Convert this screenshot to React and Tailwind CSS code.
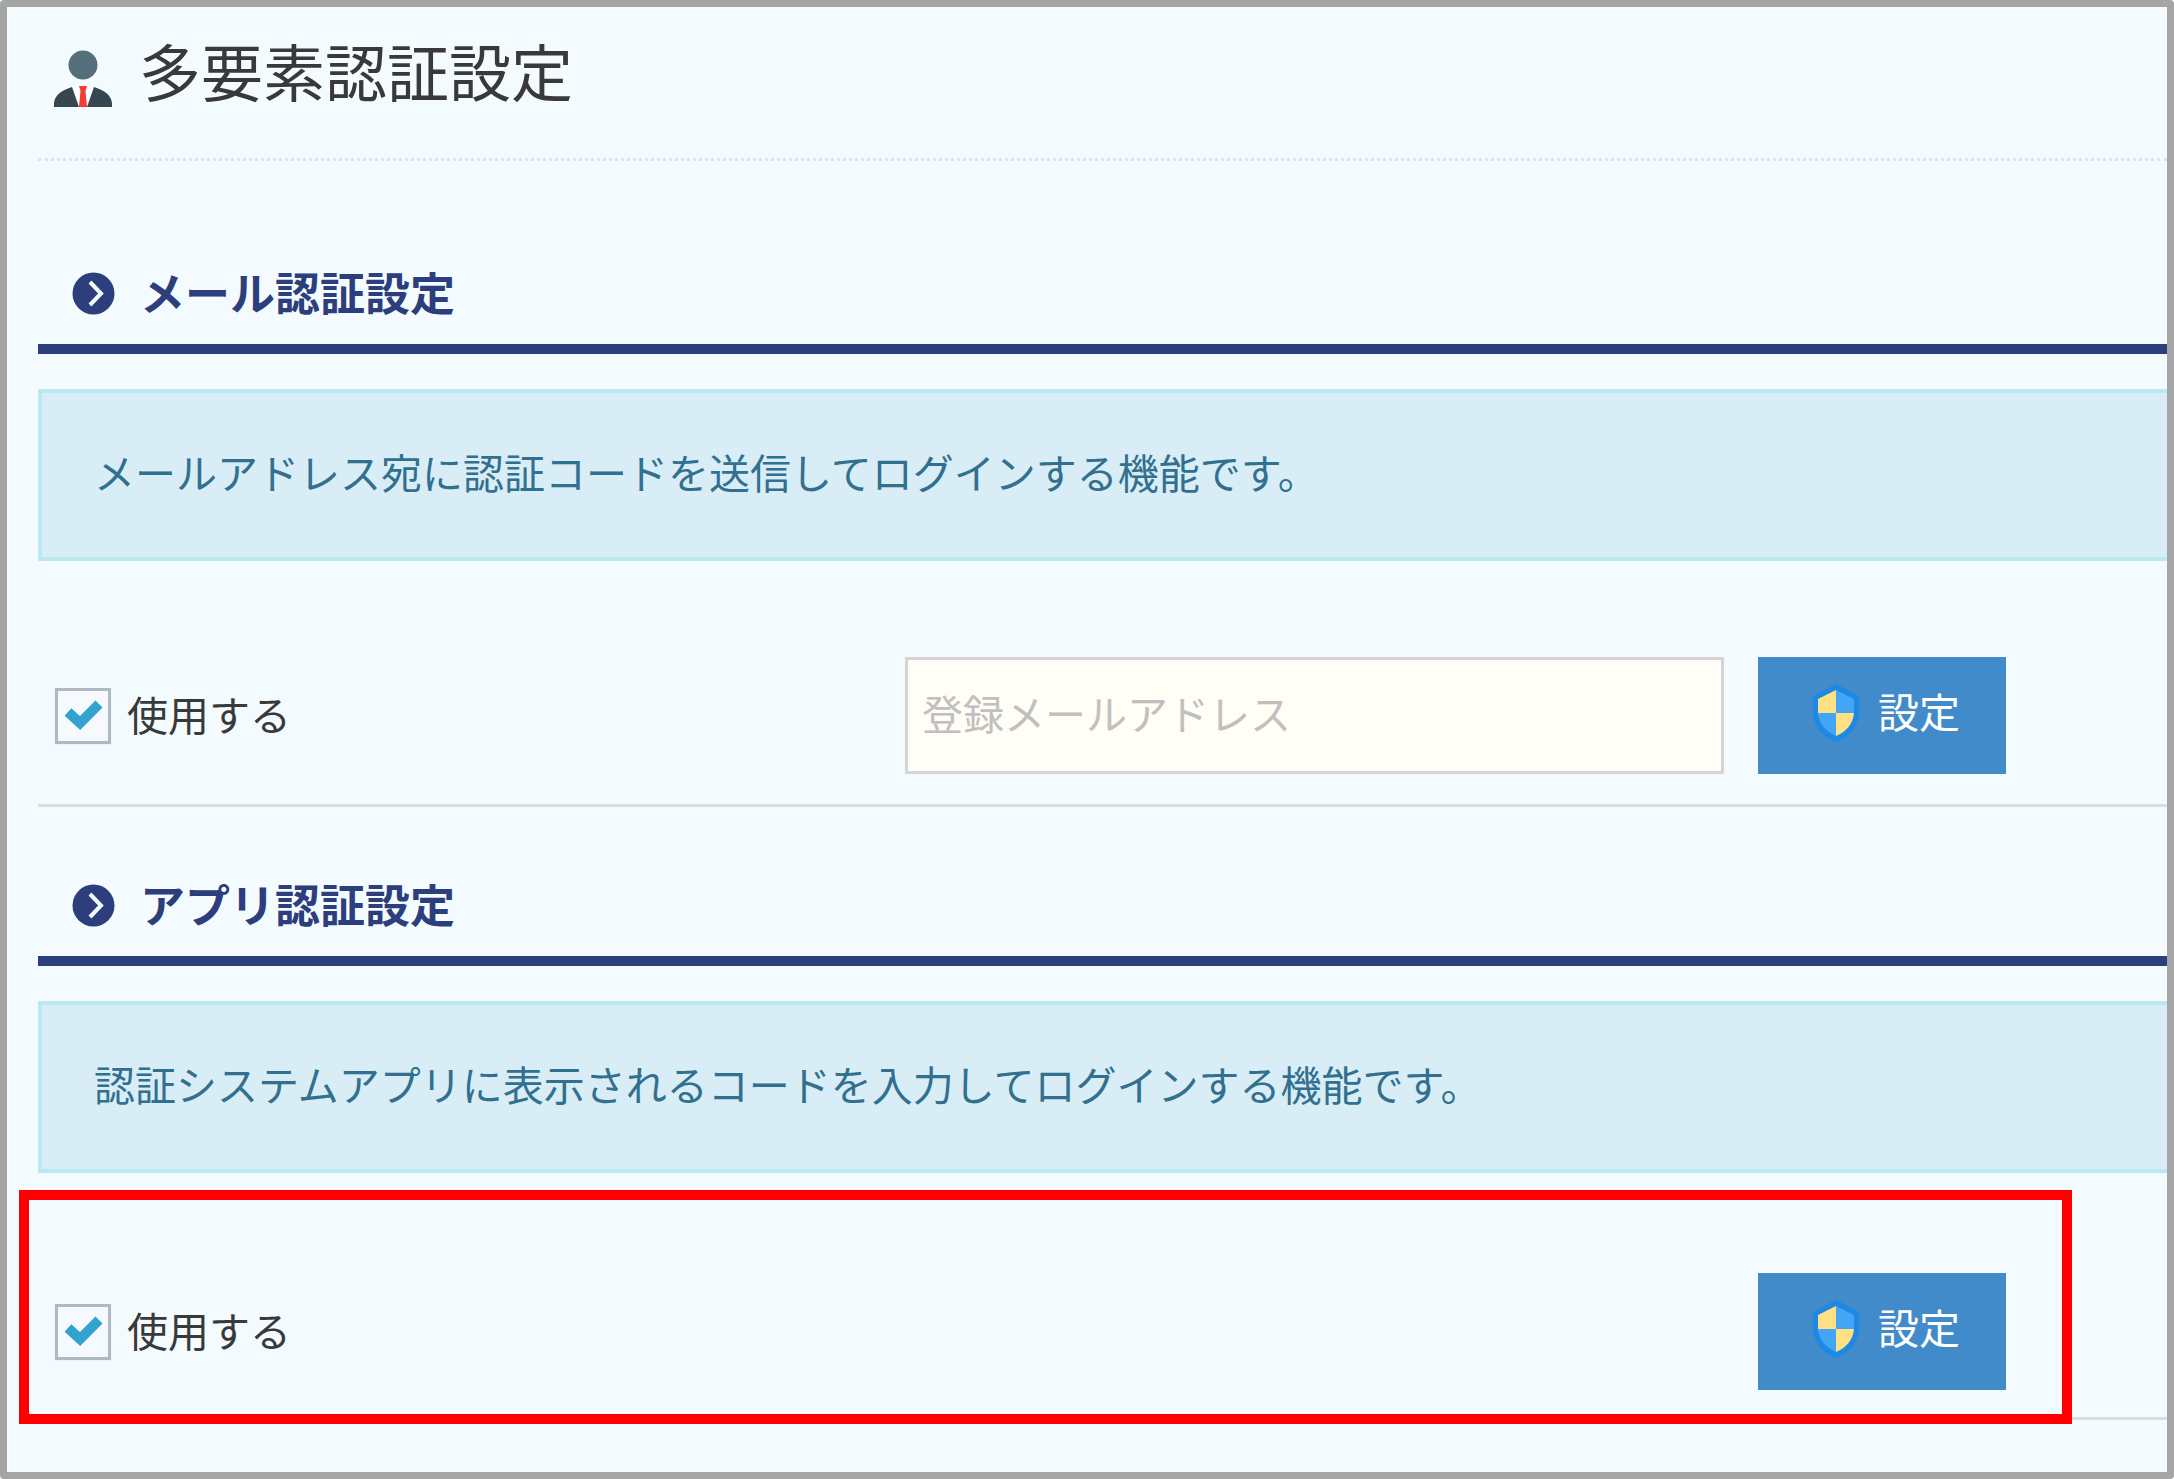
import React, { useState } from 'react';

function UserIcon() {
  return (
    <svg viewBox="0 0 58 60" className="h-[60px] w-[58px] shrink-0" aria-hidden="true">
      <circle cx="29" cy="15" r="14.5" fill="#546e7a" />
      <path d="M18 38L29 57L40 38L34 36H24Z" fill="#fff" />
      <path d="M0 57V53C1 44 9 40 18 37L25 57ZM58 57V53C57 44 49 40 40 37L33 57Z" fill="#37474f" />
      <path d="M25 36H33L31.5 41L33 57H25L26.5 41Z" fill="#f33c36" />
    </svg>
  );
}

function ShieldIcon() {
  return (
    <svg viewBox="0 0 48 58" className="h-[58px] w-12 shrink-0" aria-hidden="true">
      <path d="M24 0L47 12V26C47 42 37 54 24 58C11 54 1 42 1 26V12Z" fill="#1e88e5" />
      <path d="M24 6V29H6V15Z" fill="#ffe082" />
      <path d="M24 6L42 15V29H24Z" fill="#42a5f5" />
      <path d="M24 29V52C14 48 7 40 6 29Z" fill="#42a5f5" />
      <path d="M24 29H42C41 40 34 48 24 52Z" fill="#ffe082" />
    </svg>
  );
}

function ArrowIcon() {
  return (
    <svg viewBox="0 0 44 44" className="h-11 w-11 shrink-0" aria-hidden="true">
      <circle cx="21.5" cy="21.5" r="21" fill="#2c3e7b" />
      <path d="M18 10L29 21.5L18 33" fill="none" stroke="#f3fbff" strokeWidth="4" />
    </svg>
  );
}

function SectionHeading({ children }) {
  return (
    <h2 className="flex items-center gap-6 border-b-[10px] border-[#2c3e7b] pb-5 pl-[34px] text-[45px] leading-[56px] font-bold text-[#2c3e7b]">
      <ArrowIcon />
      <span className="pb-1">{children}</span>
    </h2>
  );
}

function InfoBox({ children }) {
  return (
    <p className="mt-[35px] border-4 border-r-0 border-[#bce8f1] bg-[#d9edf7] px-[52px] pt-[46px] pb-[54px] text-[41px] leading-[64px] text-[#31708f]">
      {children}
    </p>
  );
}

function UseCheckbox({ id, checked, onChange }) {
  return (
    <div className="flex items-center gap-4 pl-[17px]">
      <span className="relative block h-14 w-14">
        <input
          id={id}
          type="checkbox"
          checked={checked}
          onChange={(e) => onChange(e.target.checked)}
          className="block h-14 w-14 appearance-none border-[3px] border-[#aeb9c1] bg-[#f6f9fe] shadow-xs"
        />
        {checked && (
          <svg viewBox="0 0 56 56" className="pointer-events-none absolute inset-0" aria-hidden="true">
            <path d="M13 24L25 35L44 16" fill="none" stroke="#32a3ce" strokeWidth="10" />
          </svg>
        )}
      </span>
      <label htmlFor={id} className="pb-1.5 text-[41px] leading-[56px] text-[#393939]">使用する</label>
    </div>
  );
}

function SettingButton() {
  return (
    <button type="button" className="flex h-[117px] w-[248px] items-center gap-[18px] bg-[#428bca] pb-1.5 pl-[54px] text-[41px] leading-[56px] text-white">
      <ShieldIcon />
      <span className="pb-1.5">設定</span>
    </button>
  );
}

export default function App() {
  const [useMail, setUseMail] = useState(true);
  const [useApp, setUseApp] = useState(true);
  const [address, setAddress] = useState('');

  return (
    <div className="min-h-screen rounded-sm border-[7px] border-[#a5a5a5] bg-[#f3fbff] pl-[31px] font-['Noto_Sans_CJK_JP',sans-serif]">
      <header className="flex items-end gap-[27px] border-b-[3px] border-dotted border-[#dde4e8] pt-[23px] pb-12 pl-4">
        <UserIcon />
        <h1 className="text-[62px] leading-[80px] text-[#393939]">多要素認証設定</h1>
      </header>

      <main>
        <section className="pt-[103px]">
          <SectionHeading>メール認証設定</SectionHeading>
          <InfoBox>メールアドレス宛に認証コードを送信してログインする機能です。</InfoBox>
          <div className="grid grid-cols-[867fr_853fr_409fr] items-center border-b-[3px] border-[#ddd] pt-24 pb-[30px]">
            <UseCheckbox id="use-mail" checked={useMail} onChange={setUseMail} />
            <div className="pr-[34px]">
              <input
                type="email"
                aria-label="登録メールアドレス"
                placeholder="登録メールアドレス"
                value={address}
                onChange={(e) => setAddress(e.target.value)}
                className="block h-[117px] w-full border-[3px] border-[#d5d5d5] bg-[#fffdf5] px-[14px] pb-2 text-[41px] text-[#393939] placeholder:text-[#c0c0c0]"
              />
            </div>
            <SettingButton />
          </div>
        </section>

        <section className="pt-[69px]">
          <SectionHeading>アプリ認証設定</SectionHeading>
          <InfoBox>認証システムアプリに表示されるコードを入力してログインする機能です。</InfoBox>
          <div className="relative grid grid-cols-[867fr_853fr_409fr] items-center border-b-[3px] border-[#ddd] pt-[100px] pb-[27px]">
            <UseCheckbox id="use-app" checked={useApp} onChange={setUseApp} />
            <div />
            <SettingButton />
            <div className="pointer-events-none absolute top-[17px] right-[95px] -bottom-[7px] -left-[19px] border-[10px] border-[#ff0000]" />
          </div>
        </section>
      </main>
    </div>
  );
}
